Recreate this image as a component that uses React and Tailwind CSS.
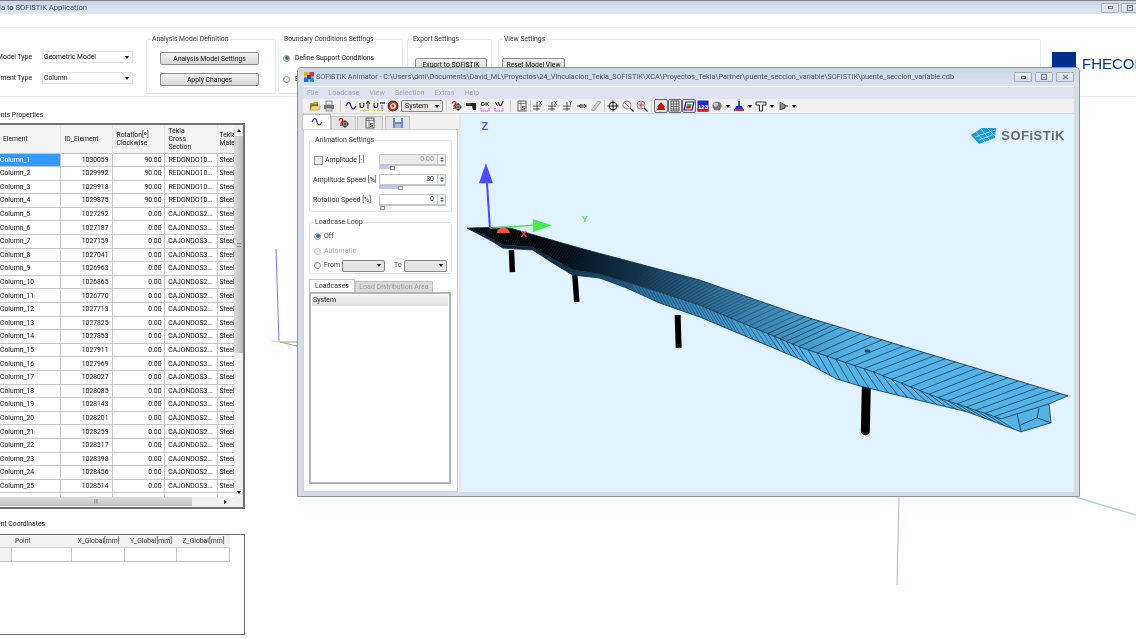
const sec2 = 'CAJONDOS2...';
const sec3 = 'CAJONDOS3...';
const red = 'REDONDO10...';

const ids = [1030059, 1029992, 1029918, 1029875, 1027292, 1027187, 1027159, 1027041, 1026963, 1026865, 1026770, 1027713, 1027825, 1027853, 1027911, 1027969, 1028027, 1028085, 1028143, 1028201, 1028259, 1028317, 1028398, 1028456, 1028514, 1028572];
const sections = [red, red, red, red, sec2, sec3, sec3, sec3, sec3, sec2, sec2, sec2, sec2, sec2, sec2, sec3, sec3, sec3, sec3, sec2, sec2, sec2, sec2, sec2, sec3, sec2];

const elements = ids.map((id, i) => ({
  name: `Column_${i + 1}`,
  id,
  rotation: i < 4 ? '90.00' : '0.00',
  section: sections[i],
}));

// piecewise interpolation along the deck outlines
function yAt(line, x) {
  for (let i = 1; i < line.length; i++) {
    if (x <= line[i][0]) {
      const [x0, y0] = line[i - 1];
      const [x1, y1] = line[i];
      return y0 + ((x - x0) / (x1 - x0)) * (y1 - y0);
    }
  }
  return line[line.length - 1][1];
}

const farEdge = [[467, 228], [507, 227], [580, 248], [700, 280], [800, 315], [1069, 396]];
const nearEdge = [[467, 228], [490, 238], [503, 245], [533, 247], [553, 259], [573, 270], [600, 274], [627, 282], [660, 292], [700, 305], [800, 347], [874, 372], [934, 396], [1002, 419]];
const lowEdge = [[467, 228], [490, 240], [503, 248], [533, 250], [553, 263], [573, 275], [600, 278], [627, 288], [660, 303], [700, 317], [800, 359], [837, 379], [860, 386], [901, 396], [968, 412], [1022, 432]];

// cross-section stations, tighter towards the far end of the deck
const stations = [];
for (let x = 467; x < 1069; ) {
  stations.push((x - 467) / 602);
  x += x < 650 ? 2.4 : x < 760 ? 4 : x < 840 ? 7 : 10.5;
}

const pts = (line) => line.map((p) => p.join(',')).join(' ');

function Bridge() {
  return (
    <svg className="absolute inset-0 w-full h-full" viewBox="461 114 614 378">
      <defs>
        <linearGradient id="deck" gradientUnits="userSpaceOnUse" x1="540" y1="0" x2="860" y2="0">
          <stop offset="0" stopColor="#000000" />
          <stop offset="0.25" stopColor="#10283c" />
          <stop offset="0.55" stopColor="#2f7099" />
          <stop offset="1" stopColor="#55b2e6" />
        </linearGradient>
        <linearGradient id="side" gradientUnits="userSpaceOnUse" x1="490" y1="0" x2="800" y2="0">
          <stop offset="0" stopColor="#0a1a28" />
          <stop offset="0.25" stopColor="#12324c" />
          <stop offset="0.5" stopColor="#2d77a8" />
          <stop offset="1" stopColor="#55b2e6" />
        </linearGradient>
      </defs>
      <path d="M511.5 250L512.5 272M575 275L577 302" stroke="#000" strokeWidth="5.5" fill="none" />
      <path d="M678 315L679 348" stroke="#000" strokeWidth="6" fill="none" />
      <path d="M867 385L866 431" stroke="#000" strokeWidth="9" strokeLinecap="round" fill="none" />
      <polygon points={`${pts(nearEdge)} ${pts([...lowEdge].reverse())}`} fill="url(#side)" />
      <polygon points={`${pts(farEdge)} 1050 404 ${pts([...nearEdge].reverse())}`} fill="url(#deck)" />
      <polygon points="1002,419 1050,404 1052,423 1022,432" fill="#55b2e6" />
      {stations.map((s, i) => {
        const xf = 467 + s * 602;
        const xn = 467 + s * 535;
        const xl = 467 + s * 555;
        const w = xf < 800 ? 0.45 : 0.7;
        return (
          <g key={i} stroke="#0f2f47" strokeWidth={w}>
            <line x1={xf} y1={yAt(farEdge, xf)} x2={xn} y2={yAt(nearEdge, xn)} />
            <line x1={xn} y1={yAt(nearEdge, xn)} x2={xl} y2={yAt(lowEdge, xl)} />
          </g>
        );
      })}
      <polyline points={pts(farEdge)} fill="none" stroke="#0f2f47" strokeWidth="0.8" />
      <polyline points={pts(nearEdge)} fill="none" stroke="#0f2f47" strokeWidth="0.8" />
      <polyline points={pts(lowEdge)} fill="none" stroke="#0f2f47" strokeWidth="0.8" />
      <path d="M1069 396L1050 404L1002 419M1050 404L1052 423L1022 432L1018 414M1022 425L1038 418L1052 423M1038 418L1040 408" fill="none" stroke="#0f2f47" strokeWidth="0.8" />
      <ellipse cx="868" cy="351" rx="3" ry="1.6" fill="#1d4a68" />

      <path d="M487 183L490 228" stroke="#4a4aff" strokeWidth="2" />
      <polygon points="486,163 479,183 493,183" fill="#4a4aff" />
      <path d="M490 228L534 225" stroke="#3fe03f" strokeWidth="1.4" />
      <polygon points="533,219 533,232 552,225" fill="#44ee44" />
      <path d="M497 233C497 226 509 226 510 233Z" fill="#f45050" />
      <text x="485" y="130" textAnchor="middle" fontSize="11" fontWeight="700" fill="#5c5cff" fontFamily="Liberation Sans, sans-serif">Z</text>
      <text x="585" y="222" textAnchor="middle" fontSize="10" fontWeight="700" fill="#66e066" fontFamily="Liberation Sans, sans-serif">Y</text>
      <text x="524" y="237" textAnchor="middle" fontSize="10" fontWeight="700" fill="#f05858" fontFamily="Liberation Sans, sans-serif">X</text>
    </svg>
  );
}

function SofistikLogo() {
  return (
    <div className="absolute right-[9px] top-[12px] flex items-center gap-[3px]">
      <svg width="28" height="17" viewBox="0 0 28 17">
        <polygon points="1,8 12,1 26,1 25,11 9,17" fill="#1b9ad6" />
        <path d="M6 5L15 15M11 2L20 13M17 1L25 9M5 10L25 3M9 13L25 7" stroke="#e0f3ff" strokeWidth="0.6" fill="none" />
      </svg>
      <span className="font-['Liberation_Sans',sans-serif] font-bold text-[13px] tracking-[0.5px] text-[#666b70]">SOFiSTiK</span>
    </div>
  );
}

function Ico({ children, size = 12 }) {
  return (
    <svg width={size} height={size} viewBox="0 0 12 12">
      {children}
    </svg>
  );
}

const txt = { fontFamily: 'Liberation Sans, sans-serif', fontWeight: 700 };

const icons = {
  folder: (
    <Ico>
      <path d="M1 3H4L5 2H9V5H1Z" fill="#c9a227" />
      <path d="M1 4H9V10H1Z" fill="#8f7a2a" />
      <path d="M3 6H12L10 10H1Z" fill="#f2d869" stroke="#6b5a1d" strokeWidth="0.4" />
    </Ico>
  ),
  printer: (
    <Ico>
      <rect x="3" y="1" width="6" height="4" fill="#e8e8e8" stroke="#555" strokeWidth="0.6" />
      <rect x="1" y="5" width="10" height="4" fill="#777" />
      <rect x="3" y="8" width="6" height="3" fill="#ddd" stroke="#555" strokeWidth="0.6" />
    </Ico>
  ),
  wave: (
    <Ico>
      <path d="M1 6C3 1 5 2 6 6" stroke="#1a1aa8" strokeWidth="1.1" fill="none" />
      <path d="M6 6C7 10 9 10 11 6" stroke="#1a1aa8" strokeWidth="1.1" fill="none" />
      <path d="M5 8L8 10" stroke="#e8c800" strokeWidth="0.8" fill="none" />
    </Ico>
  ),
  uPlus: (
    <Ico>
      <text x="0" y="8" fontSize="8" fill="#222" style={txt}>U</text>
      <path d="M9 9V2M7 4L9 1L11 4" stroke="#222" strokeWidth="1" fill="none" />
      <path d="M1 10.5H11" stroke="#e8c800" strokeWidth="1" strokeDasharray="1.5 1" />
    </Ico>
  ),
  uMinus: (
    <Ico>
      <text x="0" y="8" fontSize="8" fill="#222" style={txt}>U</text>
      <path d="M7 3H12" stroke="#222" strokeWidth="1.2" />
      <path d="M9 5V9" stroke="#3050c0" strokeWidth="1" />
      <path d="M1 10.5H11" stroke="#e8c800" strokeWidth="1" strokeDasharray="1.5 1" />
    </Ico>
  ),
  record: (
    <Ico>
      <circle cx="6" cy="6" r="5" fill="#b5301c" stroke="#401008" strokeWidth="0.8" />
      <path d="M6 3A3 3 0 1 1 3.4 4.5" fill="#f2e6d8" />
      <circle cx="6" cy="6" r="1.4" fill="#b5301c" />
    </Ico>
  ),
  question: (
    <Ico>
      <path d="M7 3V11M3 7H11" stroke="#333" strokeWidth="1" />
      <circle cx="7" cy="7" r="2.6" fill="none" stroke="#333" strokeWidth="1" />
      <text x="0" y="9" fontSize="10" fill="#e01010" style={txt}>?</text>
    </Ico>
  ),
  pistol: (
    <Ico>
      <polygon points="1,3 11,3 11,10 8,10 7,6 1,6" fill="#222" />
      <path d="M1 4H6" stroke="#bbb" strokeWidth="0.5" />
    </Ico>
  ),
  gk: (
    <Ico>
      <text x="1.5" y="6" fontSize="6" fill="#222" style={txt}>GK</text>
      <path d="M2 8V11H10V8" stroke="#e020e0" strokeWidth="1" strokeDasharray="1.4 0.8" fill="none" />
    </Ico>
  ),
  bars: (
    <Ico>
      <path d="M2 2L5 6M5 2L7 6M10 1L8 6" stroke="#222" strokeWidth="1.2" />
      <path d="M2 8V11H10V8" stroke="#e020e0" strokeWidth="1" strokeDasharray="1.4 0.8" fill="none" />
    </Ico>
  ),
  sheet: (
    <Ico>
      <rect x="2" y="1" width="8" height="10" fill="#f4f4f4" stroke="#444" strokeWidth="0.8" />
      <path d="M2 3.5H10M5 1V11" stroke="#444" strokeWidth="0.6" />
      <text x="5.6" y="9.5" fontSize="5.5" fill="#333" style={txt}>S</text>
    </Ico>
  ),
  axesX: (
    <Ico>
      <path d="M5 2V11M1 6H9M1 9H8" stroke="#333" strokeWidth="0.8" />
      <text x="7" y="4.5" fontSize="4.5" fill="#333" style={txt}>X</text>
    </Ico>
  ),
  axesY: (
    <Ico>
      <path d="M5 2V11M1 6H9M1 9H8" stroke="#333" strokeWidth="0.8" />
      <text x="7" y="4.5" fontSize="4.5" fill="#333" style={txt}>Y</text>
    </Ico>
  ),
  move: (
    <Ico>
      <path d="M1 6H11M5 4L3 6L5 8M8 4L10 6L8 8" stroke="#333" strokeWidth="1" fill="none" />
      <rect x="4.5" y="4" width="3" height="4" fill="#888" />
    </Ico>
  ),
  beam: (
    <Ico>
      <polygon points="1,10 8,1 11,2 4,11" fill="#bcbcbc" stroke="#888" strokeWidth="0.5" />
      <path d="M3 9L9 2" stroke="#e8e8e8" strokeWidth="0.7" />
    </Ico>
  ),
  target: (
    <Ico>
      <circle cx="6" cy="6" r="3.8" fill="none" stroke="#222" strokeWidth="1" />
      <path d="M6 0.5V11.5M0.5 6H11.5" stroke="#222" strokeWidth="1" />
    </Ico>
  ),
  zoomA: (
    <Ico>
      <circle cx="5" cy="5" r="4" fill="#f4f4f4" stroke="#888" strokeWidth="0.9" />
      <path d="M3 3L7 7" stroke="#d04040" strokeWidth="0.9" />
      <path d="M8 8L11.5 11.5" stroke="#222" strokeWidth="1.3" />
    </Ico>
  ),
  zoomB: (
    <Ico>
      <circle cx="5" cy="5" r="4" fill="#f4f4f4" stroke="#888" strokeWidth="0.9" />
      <path d="M5 2V8M2 5H8" stroke="#c02020" strokeWidth="0.9" />
      <path d="M8 8L11.5 11.5" stroke="#222" strokeWidth="1.3" />
    </Ico>
  ),
  house: (
    <Ico>
      <polygon points="6,2 10,7 9,7 10,10 2,10 3,7 2,7" fill="#c81010" />
    </Ico>
  ),
  grid: (
    <Ico>
      <rect x="2" y="1" width="8" height="10" fill="#eee" stroke="#222" strokeWidth="0.7" />
      <path d="M2 4H10M2 6.5H10M2 9H10M4.6 1V11M7.3 1V11" stroke="#222" strokeWidth="0.6" />
    </Ico>
  ),
  plate: (
    <Ico>
      <polygon points="3,2 11,2 9,10 1,10" fill="#f4f4f4" stroke="#1818d0" strokeWidth="1.2" />
      <polygon points="4,4 9,4 8,6 3.5,6" fill="#18c020" />
      <polygon points="3.5,6 8,6 7.5,8.5 3,8.5" fill="#e01818" />
    </Ico>
  ),
  numbers: (
    <Ico>
      <rect x="0.5" y="0.5" width="11" height="11" fill="#1a2ad0" />
      <rect x="0.5" y="7" width="11" height="4.5" fill="#d01818" />
      <text x="6" y="8.5" fontSize="6" fill="#fff" textAnchor="middle" style={txt}>123</text>
    </Ico>
  ),
  sphere: (
    <Ico>
      <circle cx="6" cy="6" r="4.6" fill="#777" />
      <circle cx="4.8" cy="4.6" r="2.2" fill="#c8c8c8" />
    </Ico>
  ),
  load: (
    <Ico>
      <path d="M6 1V6" stroke="#2030b0" strokeWidth="1.6" />
      <polygon points="3,6 9,6 10,9 2,9" fill="#2030b0" />
      <rect x="1" y="9" width="10" height="2" fill="#c03030" />
    </Ico>
  ),
  tee: (
    <Ico>
      <path d="M1 2H11V5H7.5V11H4.5V5H1Z" fill="#f4f4f4" stroke="#222" strokeWidth="0.9" />
    </Ico>
  ),
  figure: (
    <Ico>
      <path d="M3 2V10L8 8V5Z" fill="#888" stroke="#222" strokeWidth="0.7" />
      <path d="M8 6H11" stroke="#222" strokeWidth="1" />
    </Ico>
  ),
  disk: (
    <Ico>
      <rect x="1" y="1" width="10" height="10" fill="#5a8ed0" />
      <rect x="3" y="1" width="6" height="4" fill="#d8e6f6" />
      <rect x="3" y="7" width="6" height="4" fill="#bbb" />
    </Ico>
  ),
};

function Tool({ icon, pressed, className = '' }) {
  return (
    <div className={`w-[14px] h-[14px] shrink-0 flex items-center justify-center ${pressed ? 'bg-[#e4e4e4] border border-[#6d6d6d] rounded-[2px]' : ''} ${className}`}>
      {icons[icon]}
    </div>
  );
}

function Caret({ className = '' }) {
  return <span className={`w-0 h-0 border-x-[2.5px] border-x-transparent border-t-[3px] border-t-[#111] shrink-0 ${className}`} />;
}

function Sep({ className = '' }) {
  return (
    <div className={`flex justify-center shrink-0 ${className}`}>
      <div className="w-px h-[12px] bg-[#cfcfcf]" />
    </div>
  );
}

function ToolCaret() {
  return (
    <div className="w-[8px] flex justify-center shrink-0">
      <Caret />
    </div>
  );
}

function Toolbar() {
  return (
    <div className="h-[15px] bg-[#f0f0f0] border-b border-[#d8d8d8] flex items-center pl-[5px] text-[#111] shrink-0">
      <Tool icon="folder" />
      <Tool icon="printer" />
      <Sep className="w-[8px]" />
      <Tool icon="wave" />
      <Tool icon="uPlus" />
      <Tool icon="uMinus" />
      <Tool icon="record" />
      <div className="ml-px w-[42px] h-[12px] bg-[#e8e8e8] border border-[#8a8a8a] rounded-[2px] flex items-center justify-between px-[3px] text-[7px] shrink-0">
        System
        <Caret />
      </div>
      <Sep className="w-[7px]" />
      <Tool icon="question" />
      <Tool icon="pistol" />
      <Tool icon="gk" />
      <Tool icon="bars" />
      <Sep className="w-[9px]" />
      <Tool icon="sheet" />
      <Sep className="w-[2px]" />
      <Tool icon="axesX" />
      <Tool icon="axesX" className="ml-px" />
      <Tool icon="axesY" className="ml-px" />
      <Tool icon="move" />
      <Tool icon="beam" />
      <Sep className="w-[3px]" />
      <Tool icon="target" />
      <Tool icon="zoomA" className="ml-px" />
      <Tool icon="zoomB" />
      <Sep className="w-[5px]" />
      <Tool icon="house" pressed />
      <Tool icon="grid" pressed />
      <Tool icon="plate" pressed />
      <Tool icon="numbers" />
      <Tool icon="sphere" />
      <ToolCaret />
      <Tool icon="load" />
      <ToolCaret />
      <Tool icon="tee" />
      <ToolCaret />
      <Tool icon="figure" />
      <ToolCaret />
    </div>
  );
}

function Radio({ checked, disabled }) {
  return (
    <span className={`w-[7px] h-[7px] rounded-full border shrink-0 flex items-center justify-center ${disabled ? 'border-[#c4c4c4] bg-[#ececec]' : 'border-[#8a8a8a] bg-[#f4f4f4]'}`}>
      {checked && <span className="w-[4px] h-[4px] rounded-full bg-[#2c6fa8]" />}
    </span>
  );
}

function Spinner({ value, disabled, fill, thumb }) {
  return (
    <div className="w-[67px] shrink-0 pt-[3px]">
      <div className={`h-[11px] border border-[#c4c4c4] rounded-[1px] flex ${disabled ? 'bg-[#ececec] text-[#9a9a9a]' : 'bg-white text-[#222]'}`}>
        <span className="flex-1 text-right pr-[3px] leading-[9px]">{value}</span>
        <span className="w-[8px] border-l border-[#c8c8c8] bg-[#eef1f6] flex flex-col items-center justify-around py-px">
          <span className="w-0 h-0 border-x-[2px] border-x-transparent border-b-[2px] border-b-[#666]" />
          <span className="w-0 h-0 border-x-[2px] border-x-transparent border-t-[2px] border-t-[#666]" />
        </span>
      </div>
      <div className="relative h-[5px] border-t border-[#c4c4c4]">
        <div className="h-[3px] bg-[#bcc6ee]" style={{ width: fill }} />
        <span className="absolute top-0 w-[5px] h-[4px] bg-[#e4e4e4] border border-[#9a9a9a]" style={{ left: thumb }} />
      </div>
    </div>
  );
}

function MiniSelect({ width }) {
  return (
    <div className={`${width} h-[12px] bg-[#e4e4e4] border border-[#8a8a8a] rounded-[2px] flex items-center justify-end pr-[3px] shrink-0`}>
      <Caret />
    </div>
  );
}

function AnimatorPanel() {
  return (
    <div className="w-[158px] shrink-0 flex flex-col bg-[#f0f0f0] border-r-2 border-[#e6e6e6] text-[7px] text-[#333]">
      <div className="h-[15px] flex items-end -ml-px">
        <div className="w-[29px] h-[15px] bg-white border border-b-0 border-[#c4c4c4] flex items-center justify-center">{icons.wave}</div>
        <div className="w-[25px] h-[13px] bg-[#e4e4e4] border border-b-0 border-[#c4c4c4] flex items-center justify-center">{icons.question}</div>
        <div className="w-[26px] h-[13px] ml-px bg-[#e4e4e4] border border-b-0 border-[#c4c4c4] flex items-center justify-center">{icons.sheet}</div>
        <div className="w-[25px] h-[13px] ml-[2px] bg-[#e4e4e4] border border-b-0 border-[#c4c4c4] flex items-center justify-center">{icons.disk}</div>
      </div>
      <div className="flex-1 bg-white border border-[#d0d0d0] mr-px px-[5px] flex flex-col">
        <fieldset className="border border-[#dfe3e8] rounded-[2px] h-[77px] mt-[5px] min-w-0">
          <legend className="ml-[4px] px-px">Animation Settings</legend>
          <div className="pl-[3px] pr-[5px] pt-[5px]">
            <div className="flex items-center h-[20px]">
              <span className="w-[9px] h-[9px] border border-[#9a9a9a] bg-[#f0f0f0] mr-[2px] ml-px" />
              <span className="flex-1">Amplitude [-]</span>
              <Spinner value="0.00" disabled fill="15px" thumb="11px" />
            </div>
            <div className="flex items-center h-[20px]">
              <span className="flex-1 whitespace-nowrap">Amplitude Speed [%]</span>
              <Spinner value="30" fill="22px" thumb="19px" />
            </div>
            <div className="flex items-center h-[20px]">
              <span className="flex-1 whitespace-nowrap">Rotation Speed [%]</span>
              <Spinner value="0" fill="0px" thumb="1px" />
            </div>
          </div>
        </fieldset>
        <fieldset className="border border-[#dfe3e8] rounded-[2px] h-[57px] mt-[5px] min-w-0">
          <legend className="ml-[4px] px-px">Loadcase Loop</legend>
          <div className="pl-[4px] pt-px">
            <div className="flex items-center gap-[3px] h-[15px]">
              <Radio checked />
              Off
            </div>
            <div className="flex items-center gap-[3px] h-[15px] text-[#a8a8a8]">
              <Radio disabled />
              Automatic
            </div>
            <div className="flex items-center h-[14px]">
              <Radio />
              <span className="ml-[3px] w-[18px]">From</span>
              <MiniSelect width="w-[43px]" />
              <span className="ml-[9px] w-[10px] text-[#555]">To</span>
              <MiniSelect width="w-[43px]" />
            </div>
          </div>
        </fieldset>
        <div className="flex items-end h-[13px] mt-[5px]">
          <div className="w-[46px] h-[13px] border border-b-0 border-[#c4c4c4] flex items-center justify-center">Loadcases</div>
          <div className="w-[78px] h-[11px] bg-[#dcdcdc] border border-b-0 border-[#c4c4c4] flex items-center justify-center text-[#9a9a9a]">Load Distribution Area</div>
        </div>
        <div className="h-[192px] w-[142px] border-2 border-[#b4b4b4] p-px">
          <div className="h-[11px] bg-gradient-to-b from-[#f2f2f2] to-[#dedede] px-[1px] leading-[11px] text-[#222]">System</div>
        </div>
      </div>
    </div>
  );
}

function AnimatorWindow() {
  const title = 'SOFiSTiK Animator - C:\\Users\\dml\\Documents\\David_ML\\Proyectos\\24_Vinculacion_Tekla_SOFISTIK\\XCA\\Proyectos_Tekla\\Partner\\puente_seccion_variable\\SOFISTIK\\puente_seccion_variable.cdb';
  return (
    <div className="absolute left-[297px] top-[67px] w-[783px] h-[430px] flex flex-col bg-[#d3deea] border border-[#8d949c] rounded-t-[4px] px-[5px] pb-[4px]">
      <div className="h-[18px] flex items-center bg-gradient-to-b from-[#cbd7e4] to-[#d9e4ef] -mx-[5px] px-[5px] rounded-t-[4px] shrink-0">
        <svg width="12" height="12" viewBox="0 0 12 12" className="mr-px shrink-0">
          <rect x="1" y="1" width="4.5" height="4.5" fill="#e0b020" />
          <rect x="6.5" y="1" width="4.5" height="4.5" fill="#d03050" />
          <rect x="1" y="6.5" width="4.5" height="4.5" fill="#2068d0" />
          <rect x="6.5" y="6.5" width="4.5" height="4.5" fill="#20a0d0" />
          <rect x="4" y="4" width="4" height="4" fill="#3040a0" />
        </svg>
        <span className="text-[7.27px] text-[#46525e] whitespace-nowrap flex-1 overflow-hidden">{title}</span>
        <div className="flex gap-[3px] shrink-0 text-[#555]">
          <WinButton kind="min" />
          <WinButton kind="max" />
          <WinButton kind="close" />
        </div>
      </div>
      <div className="h-[13px] bg-[#dfe3f1] border-t border-white flex items-center gap-[10px] pl-[4px] text-[7.2px] text-[#a3a7b0] shrink-0">
        <span>File</span>
        <span>Loadcase</span>
        <span>View</span>
        <span>Selection</span>
        <span>Extras</span>
        <span>Help</span>
      </div>
      <Toolbar />
      <div className="flex-1 flex min-h-0">
        <AnimatorPanel />
        <div className="relative flex-1 bg-[#e0f3ff]">
          <Bridge />
          <SofistikLogo />
        </div>
      </div>
    </div>
  );
}

function WinButton({ kind }) {
  return (
    <div className="w-[18px] h-[10px] border border-[#a4afba] rounded-[1px] bg-gradient-to-b from-[#e6edf4] to-[#d3dde8] flex items-center justify-center">
      {kind === 'min' && <span className="w-[5px] h-[3px] border border-[#777] bg-white" />}
      {kind === 'max' && (
        <span className="w-[6px] h-[6px] border border-[#777] flex items-center justify-center">
          <span className="w-[2px] h-px bg-[#777]" />
        </span>
      )}
      {kind === 'close' && (
        <svg width="7" height="6" viewBox="0 0 7 6">
          <path d="M1 1L6 5M6 1L1 5" stroke="#888" strokeWidth="1.3" />
        </svg>
      )}
    </div>
  );
}

function Group({ title, className = '', inner = '', children }) {
  return (
    <fieldset className={`border border-[#e4e9ee] rounded-[2px] h-[60px] shrink-0 min-w-0 ${className}`}>
      <legend className="ml-[4px] px-px text-[#333]">{title}</legend>
      <div className={inner}>{children}</div>
    </fieldset>
  );
}

function Combo({ value }) {
  return (
    <div className="w-[91px] h-[12px] bg-white border border-[#e2e2e2] flex items-center justify-between px-px pr-[3px]">
      {value}
      <Caret />
    </div>
  );
}

function Btn({ children, className = '' }) {
  return (
    <div className={`h-[13px] bg-gradient-to-b from-[#f3f3f3] to-[#d8d8d8] border border-[#8c8c8c] rounded-[2px] flex items-center justify-center whitespace-nowrap ${className}`}>
      {children}
    </div>
  );
}

function Ribbon() {
  return (
    <div className="h-[69px] border-b border-[#eeeeee] flex items-start pt-[6px] shrink-0">
      <div className="w-[146px] shrink-0 pt-[17px] flex flex-col gap-[9px]">
        <div className="flex items-center h-[12px]">
          <span className="w-[32px] mr-[10px] whitespace-nowrap overflow-hidden flex justify-end">Model Type</span>
          <Combo value="Geometric Model" />
        </div>
        <div className="flex items-center h-[12px]">
          <span className="w-[32px] mr-[10px] whitespace-nowrap overflow-hidden flex justify-end">Element Type</span>
          <Combo value="Column" />
        </div>
      </div>
      <Group title="Analysis Model Definition" className="w-[130px]" inner="px-[13px] pt-[8px]">
        <Btn className="w-[99px]">Analysis Model Settings</Btn>
        <Btn className="w-[99px] mt-[8px]">Apply Changes</Btn>
      </Group>
      <Group title="Boundary Conditions Settings" className="w-[125px] ml-[2px]" inner="px-[4px] pt-[9px]">
        <div className="flex items-center gap-[5px]">
          <Radio checked />
          Define Support Conditions
        </div>
        <div className="flex items-center gap-[5px] mt-[11px]">
          <Radio />
          Edit Support Conditions
        </div>
      </Group>
      <Group title="Export Settings" className="w-[85px] ml-[4px]" inner="px-[7px] pt-[14px]">
        <Btn className="w-[72px]">Export to SOFiSTiK</Btn>
      </Group>
      <Group title="View Settings" className="w-[543px] ml-[6px]" inner="px-[3px] pt-[14px]">
        <Btn className="w-[63px]">Reset Model View</Btn>
      </Group>
      <div className="ml-[11px] mt-[18px] flex items-start gap-[6px] shrink-0">
        <div className="w-[24px] h-[24px] bg-[#00308f]" />
        <span className="font-['Liberation_Sans',sans-serif] text-[15px] leading-[24px] text-[#003a8f]">FHECOR</span>
      </div>
    </div>
  );
}

function ElementTable() {
  return (
    <div className="relative w-[245px] h-[386px] border-2 border-l-0 border-[#6f6f6f] overflow-hidden">
      <div className="w-[234px] h-[374px] overflow-hidden">
        <table className="w-[234px] table-fixed border-collapse">
          <thead>
            <tr className="h-[28px] bg-[#f4f4f4] border-b border-[#c4c4c4] text-left align-middle leading-[8px]">
              <th className="w-[60px] pl-[3px] font-normal border-r border-[#e6e6e6]">Element</th>
              <th className="w-[52px] pl-[4px] font-normal border-r border-[#e6e6e6]">ID_Element</th>
              <th className="w-[52px] pl-[4px] font-normal border-r border-[#e6e6e6]">Rotation[º]<br />Clockwise</th>
              <th className="w-[53px] pl-[4px] font-normal border-r border-[#e6e6e6]">Tekla<br />Cross<br />Section</th>
              <th className="pl-[2px] font-normal whitespace-nowrap overflow-hidden">Tekla<br />Material</th>
            </tr>
          </thead>
          <tbody>
            {elements.map((el, i) => (
              <tr key={el.id} className="h-[13.6px] border-b border-[#c6c6c6]">
                <td className={`border-r border-[#c6c6c6] ${i === 0 ? 'bg-[#3399ff] text-white' : ''}`}>{el.name}</td>
                <td className="pr-[3px] text-right border-r border-[#c6c6c6]">{el.id}</td>
                <td className="pr-[2px] text-right border-r border-[#c6c6c6]">{el.rotation}</td>
                <td className="text-center border-r border-[#c6c6c6] whitespace-nowrap overflow-hidden">{el.section}</td>
                <td className="pl-[2px] whitespace-nowrap">Steel</td>
              </tr>
            ))}
          </tbody>
        </table>
      </div>
      <div className="absolute right-0 top-0 bottom-[10px] w-[9px] bg-[#f0f0f0] flex flex-col items-center">
        <div className="h-[11px] flex items-center">
          <span className="w-0 h-0 border-x-[2.5px] border-x-transparent border-b-[3px] border-b-[#222]" />
        </div>
        <div className="w-[9px] h-[217px] bg-gradient-to-r from-[#dcdcdc] to-[#bcbcbc] rounded-[1px] flex items-center justify-center">
          <span className="w-[4px] h-[4px] border-y border-[#888]" />
        </div>
        <div className="flex-1" />
        <div className="h-[10px] flex items-center">
          <Caret />
        </div>
      </div>
      <div className="absolute left-0 right-0 bottom-0 h-[10px] bg-[#f0f0f0]">
        <div className="w-[192px] h-[9px] bg-gradient-to-b from-[#dcdcdc] to-[#c4c4c4] flex items-center justify-center text-[5px] text-[#555] leading-none">|||</div>
        <span className="absolute right-[16px] top-[3px] w-0 h-0 border-y-[2.5px] border-y-transparent border-l-[3px] border-l-[#222]" />
      </div>
    </div>
  );
}

function CoordinateTable() {
  return (
    <div className="w-[245px] h-[101px] border border-l-0 border-[#6f6f6f]">
      <div className="flex h-[13px] w-[230px] bg-[#f2f2f2] border-b border-[#d0d0d0] text-[#333] items-center">
        <div className="w-[11px]" />
        <div className="w-[61px] pl-[4px]">Point</div>
        <div className="w-[53px] text-center">X_Global[mm]</div>
        <div className="w-[52px] text-center">Y_Global[mm]</div>
        <div className="w-[53px] text-center">Z_Global[mm]</div>
      </div>
      <div className="flex h-[14px] w-[230px] border-b border-[#c6c6c6]">
        <div className="w-[11px] bg-[#f2f2f2]" />
        <div className="w-[61px] border-x border-[#c6c6c6]" />
        <div className="w-[53px] border-r border-[#c6c6c6]" />
        <div className="w-[52px] border-r border-[#c6c6c6]" />
        <div className="w-[53px] border-r border-[#c6c6c6]" />
      </div>
    </div>
  );
}

export default function App() {
  return (
    <div className="relative w-[1136px] h-[639px] overflow-hidden bg-white font-['Roboto',sans-serif] text-[6.8px] text-[#111] blur-[0.3px]">
      <svg className="absolute inset-0 w-full h-full" viewBox="0 0 1136 639">
        <path d="M276 249L279 342" stroke="#7a7af0" />
        <path d="M271 341L280 342" stroke="#bcdcdc" />
        <path d="M280 342L297 342" stroke="#80c080" />
        <path d="M280 342L297 346" stroke="#e08080" />
        <path d="M899 497L897 585" stroke="#a0c4cc" />
        <path d="M1075 497L1136 515" stroke="#a8d8dc" strokeWidth="1.5" />
      </svg>

      <div className="relative flex flex-col">
        <div className="h-[14px] flex items-center justify-between border-t border-[#7c8087] bg-gradient-to-b from-[#c8d6e5] to-[#dfe9f4] shrink-0">
          <span className="-ml-[13px] text-[7.6px] text-[#46525e] whitespace-nowrap">Tekla to SOFiSTiK Application</span>
          <div className="flex gap-[2px] -mr-[3px]">
            <WinButton kind="min" />
            <WinButton kind="max" />
          </div>
        </div>
        <div className="h-[14px] border-b border-[#eeeeee] shrink-0" />
        <Ribbon />
        <div className="h-[26px] flex items-end pb-[3px] shrink-0 overflow-hidden">
          <span className="-ml-[18px] whitespace-nowrap">Elements Properties</span>
        </div>
        <ElementTable />
        <div className="h-[25px] flex items-center pt-[6px] overflow-hidden">
          <span className="-ml-[18px] whitespace-nowrap">Element Coordinates</span>
        </div>
        <CoordinateTable />
      </div>

      <AnimatorWindow />
    </div>
  );
}
